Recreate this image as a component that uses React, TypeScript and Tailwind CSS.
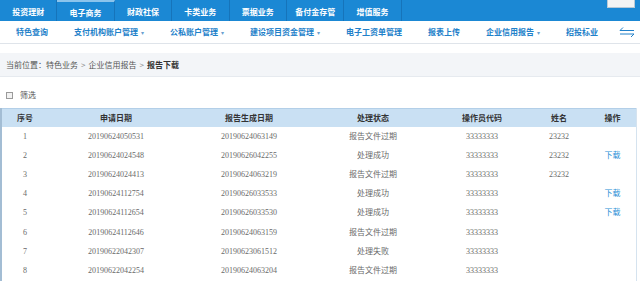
import React from "react";

type rowType = {
  apply: string;
  created: string;
  status: string;
  code: string;
  name: string;
  canDownload: boolean;
};

const topTabs = ["投资理财", "电子商务", "财政社保", "卡类业务", "票据业务", "备付金存管", "增值服务"];

const subMenus = [
  { label: "特色查询", drop: false },
  { label: "支付机构账户管理", drop: true },
  { label: "公私账户管理", drop: true },
  { label: "建设项目资金管理", drop: true },
  { label: "电子工资单管理", drop: false },
  { label: "报表上传", drop: false },
  { label: "企业信用报告", drop: true },
  { label: "招投标业", drop: false },
];

const rows: rowType[] = [
  { apply: "20190624050531", created: "20190624063149", status: "报告文件过期", code: "33333333", name: "23232", canDownload: false },
  { apply: "20190624024548", created: "20190626042255", status: "处理成功", code: "33333333", name: "23232", canDownload: true },
  { apply: "20190624024413", created: "20190624063219", status: "报告文件过期", code: "33333333", name: "23232", canDownload: false },
  { apply: "20190624112754", created: "20190626033533", status: "处理成功", code: "33333333", name: "", canDownload: true },
  { apply: "20190624112654", created: "20190626033530", status: "处理成功", code: "33333333", name: "", canDownload: true },
  { apply: "20190624112646", created: "20190624063159", status: "报告文件过期", code: "33333333", name: "", canDownload: false },
  { apply: "20190622042307", created: "20190623061512", status: "处理失败", code: "33333333", name: "", canDownload: false },
  { apply: "20190622042254", created: "20190624063204", status: "报告文件过期", code: "33333333", name: "", canDownload: false },
];

const headers = ["序号", "申请日期", "报告生成日期", "处理状态", "操作员代码", "姓名", "操作"];

const gridCols = "grid grid-cols-[46px_136px_130px_118px_100px_54px_53px]";

const App = () => {
  return (
    <div
      className="w-[640px] h-[284px] overflow-hidden bg-white"
      style={{ fontFamily: '"Noto Sans CJK SC", "Liberation Sans", sans-serif' }}
    >
      {/* top nav */}
      <div className="flex h-[21px] bg-[#1b88d4]">
        {topTabs.map((t, i) => (
          <div
            key={t}
            className={`w-[57.4px] shrink-0 flex items-center justify-center pt-[3px] border-r border-r-[#1674ba] text-white text-[8px] font-bold ${
              i === 1 ? "border-t-2 border-t-[#8cc4ec]" : ""
            }`}
          >
            {t}
          </div>
        ))}
        <div className="ml-auto mr-[5px] self-start w-[28px] h-[8px] bg-[#f4f4f4] border border-t-0 border-[#b9c9d6]" />
      </div>

      {/* sub nav */}
      <div className="flex items-center h-[23px] pl-[16px] border-b border-[#dfe4ea] text-[#2180c9] text-[8px] font-bold">
        <div className="flex items-center gap-[26px]">
          {subMenus.map((m) => (
            <div key={m.label} className="flex items-center gap-[3px] whitespace-nowrap">
              <span>{m.label}</span>
              {m.drop && <span className="text-[6px] font-normal text-[#6a9fcf]">▾</span>}
            </div>
          ))}
        </div>
        <svg className="ml-auto mr-[4px]" width="18" height="10" viewBox="0 0 18 10" fill="none" stroke="#2180c9" strokeWidth="1">
          <path d="M2 3.5 H16" />
          <path d="M5 0.5 L2 3.5" />
          <path d="M2 7 H16" />
          <path d="M13 10 L16 7" />
        </svg>
      </div>

      {/* breadcrumb */}
      <div className="mt-[9px] h-[24px] flex items-center pl-[6px] bg-[#f3f5f8] border-b border-[#e6eaef] text-[8px] text-[#555] whitespace-nowrap">
        <span>当前位置：特色业务</span>
        <span className="mx-[3px] text-[#888]">&gt;</span>
        <span>企业信用报告</span>
        <span className="mx-[3px] text-[#888]">&gt;</span>
        <span className="font-bold text-[#333]">报告下载</span>
      </div>

      {/* filter */}
      <div className="mt-[12px] h-[12px] flex items-center pl-[6px] gap-[7px] text-[8px] text-[#555]">
        <div className="w-[7px] h-[7px] border border-[#9a9a9a] bg-[#f2f2f2]" />
        <span>筛选</span>
      </div>

      {/* table */}
      <div className="mt-[7px] w-[637px] border-l-2 border-l-[#a3bdd4] border-r border-r-[#d5e3ef]">
        <div className={`${gridCols} h-[19px] items-center bg-[#c9e0f3] border-t border-[#b3cfe8] text-[8px] font-bold text-[#333]`}>
          {headers.map((h) => (
            <div key={h} className="text-center whitespace-nowrap">{h}</div>
          ))}
        </div>
        {rows.map((r, i) => (
          <div
            key={r.apply}
            className={`${gridCols} h-[19.2px] items-center text-[8px] text-[#6a6a6a]`}
            style={{ fontFamily: '"Liberation Serif", "Noto Sans CJK SC", serif' }}
          >
            <div className="text-center">{i + 1}</div>
            <div className="text-center">{r.apply}</div>
            <div className="text-center">{r.created}</div>
            <div className="text-center">{r.status}</div>
            <div className="text-center">{r.code}</div>
            <div className="text-center">{r.name}</div>
            <div className="text-center text-[#2a8fd6]">{r.canDownload ? "下载" : ""}</div>
          </div>
        ))}
      </div>
    </div>
  );
};

export default App;
